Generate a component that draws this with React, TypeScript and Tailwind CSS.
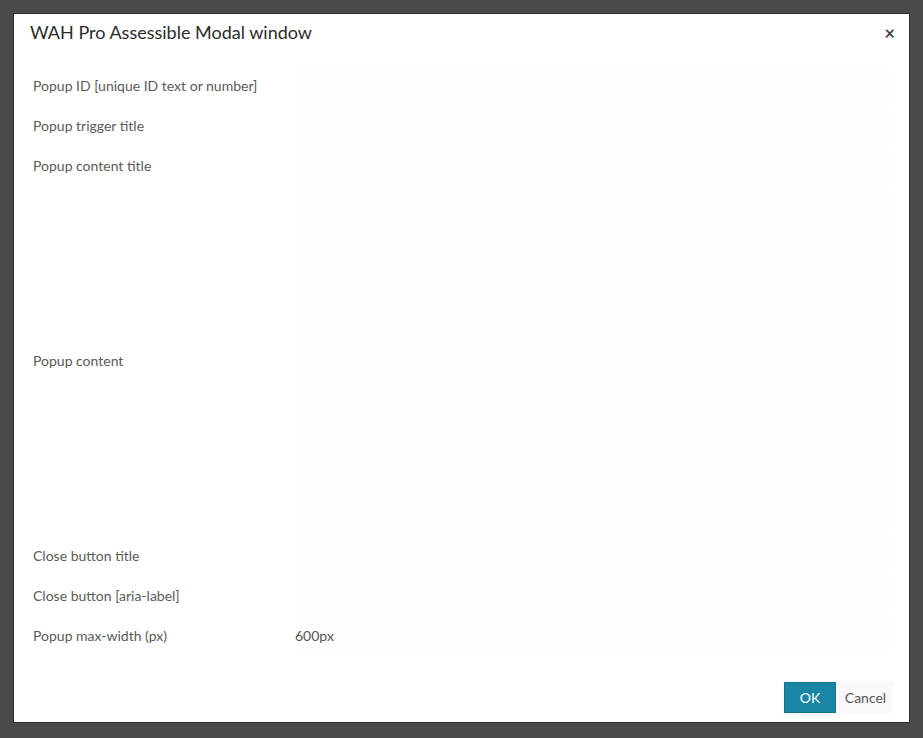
import React from "react";

const rows: { label: string; value?: string; tall?: boolean }[] = [
  { label: "Popup ID [unique ID text or number]" },
  { label: "Popup trigger title" },
  { label: "Popup content title" },
  { label: "Popup content", tall: true },
  { label: "Close button title" },
  { label: "Close button [aria-label]" },
  { label: "Popup max-width (px)", value: "600px" },
];

export default function App() {
  return (
    <div
      className="w-[923px] h-[738px] bg-[#4a4a4a] overflow-hidden pt-[13px] pl-[13px]"
      style={{ fontFamily: "Lato, 'Open Sans', sans-serif" }}
    >
      <div className="w-[897px] h-[710px] bg-white border border-[#2e2e2e] flex flex-col">
        <div className="h-[37px] flex items-center justify-between pl-[16px] pr-[14px]">
          <span className="text-[18px] text-[#2b2b2b]">WAH Pro Assessible Modal window</span>
          <span className="text-[18px] text-[#444] font-bold leading-none">×</span>
        </div>
        <div className="flex flex-col pt-[14px] pl-[19px] pr-[16px]">
          {rows.map((r) => (
            <div
              key={r.label}
              className={`flex items-center ${r.tall ? "h-[350px]" : "h-[40px]"}`}
            >
              <div className="w-[262px] text-[14px] text-[#5a5a5a]">{r.label}</div>
              <div
                className={`flex-1 flex items-center ${r.tall ? "h-[340px]" : "h-[32px]"} bg-[#fefefe] text-[14px] text-[#555]`}
              >
                {r.value ?? ""}
              </div>
            </div>
          ))}
        </div>
        <div className="flex-1 flex items-end justify-end gap-[2px] pr-[16px] pb-[9px]">
          <button className="w-[52px] h-[31px] bg-[#1a86a5] text-white text-[14px] border border-[#17738d]">
            OK
          </button>
          <button className="w-[55px] h-[31px] bg-[#fbf8fb] text-[#555] text-[14px]">Cancel</button>
        </div>
      </div>
    </div>
  );
}
